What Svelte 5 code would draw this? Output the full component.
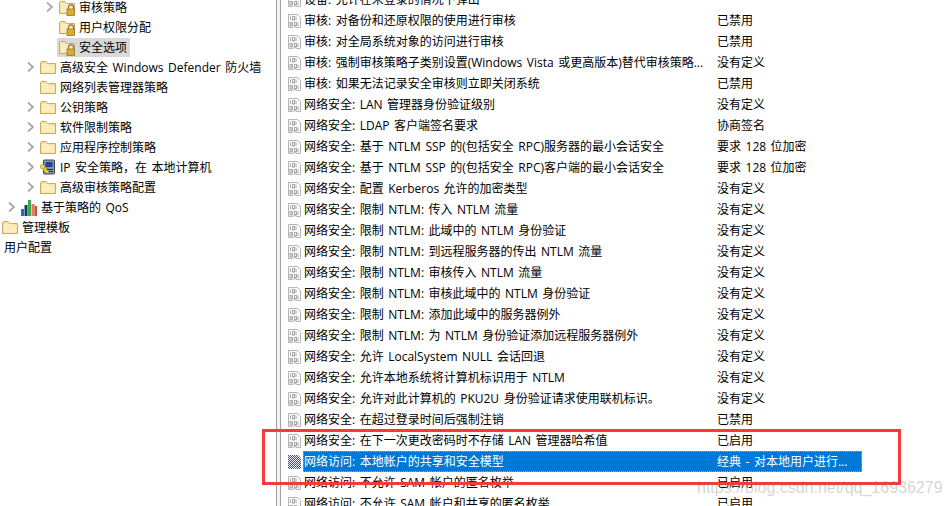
<script>
  const tree = [
    { label: '审核策略', level: 3, icon: 'lock', arrow: true },
    { label: '用户权限分配', level: 3, icon: 'lock' },
    { label: '安全选项', level: 3, icon: 'lock', active: true },
    { label: '高级安全 Windows Defender 防火墙', level: 2, icon: 'folder', arrow: true },
    { label: '网络列表管理器策略', level: 2, icon: 'folder' },
    { label: '公钥策略', level: 2, icon: 'folder', arrow: true },
    { label: '软件限制策略', level: 2, icon: 'folder', arrow: true },
    { label: '应用程序控制策略', level: 2, icon: 'folder', arrow: true },
    { label: 'IP 安全策略，在 本地计算机', level: 2, icon: 'ip', arrow: true },
    { label: '高级审核策略配置', level: 2, icon: 'folder', arrow: true },
    { label: '基于策略的 QoS', level: 1, icon: 'qos', arrow: true },
    { label: '管理模板', level: 0, icon: 'folder' },
    { label: '用户配置', level: -1 }
  ];

  const ntlm = '网络安全: 限制 NTLM: ';
  const undef = '没有定义';
  const rows = [
    ['设备: 允许在未登录的情况下弹出', ''],
    ['审核: 对备份和还原权限的使用进行审核', '已禁用'],
    ['审核: 对全局系统对象的访问进行审核', '已禁用'],
    ['审核: 强制审核策略子类别设置(Windows Vista 或更高版本)替代审核策略...', undef],
    ['审核: 如果无法记录安全审核则立即关闭系统', '已禁用'],
    ['网络安全: LAN 管理器身份验证级别', undef],
    ['网络安全: LDAP 客户端签名要求', '协商签名'],
    ['网络安全: 基于 NTLM SSP 的(包括安全 RPC)服务器的最小会话安全', '要求 128 位加密'],
    ['网络安全: 基于 NTLM SSP 的(包括安全 RPC)客户端的最小会话安全', '要求 128 位加密'],
    ['网络安全: 配置 Kerberos 允许的加密类型', undef],
    [ntlm + '传入 NTLM 流量', undef],
    [ntlm + '此域中的 NTLM 身份验证', undef],
    [ntlm + '到远程服务器的传出 NTLM 流量', undef],
    [ntlm + '审核传入 NTLM 流量', undef],
    [ntlm + '审核此域中的 NTLM 身份验证', undef],
    [ntlm + '添加此域中的服务器例外', undef],
    [ntlm + '为 NTLM 身份验证添加远程服务器例外', undef],
    ['网络安全: 允许 LocalSystem NULL 会话回退', undef],
    ['网络安全: 允许本地系统将计算机标识用于 NTLM', undef],
    ['网络安全: 允许对此计算机的 PKU2U 身份验证请求使用联机标识。', undef],
    ['网络安全: 在超过登录时间后强制注销', '已禁用'],
    ['网络安全: 在下一次更改密码时不存储 LAN 管理器哈希值', '已启用'],
    ['网络访问: 本地帐户的共享和安全模型', '经典 - 对本地用户进行...'],
    ['网络访问: 不允许 SAM 帐户的匿名枚举', '已启用'],
    ['网络访问: 不允许 SAM 帐户和共享的匿名枚举', '已启用']
  ];
  const selected = 22;
</script>

<svg class="defs" width="0" height="0" aria-hidden="true">
  <defs>
    <pattern id="dither" width="2" height="2" patternUnits="userSpaceOnUse">
      <rect width="2" height="2" fill="#e8edf2" />
      <rect width="1" height="1" fill="#44566e" />
      <rect x="1" y="1" width="1" height="1" fill="#44566e" />
    </pattern>
  </defs>
</svg>

{#snippet folder()}
  <path d="M0.5 3.5V14.5H15.5V4.5H7.5L6 2.5H1.5Z" fill="#f7e3a4" stroke="#c9a95f" />
  <path d="M2 6.5H14.5V13.5H2Z" fill="#fbeebc" />
  <path d="M1.5 5.5H8L9 4.5" fill="none" stroke="#fff6d8" />
{/snippet}

<main class="page">
  <nav class="tree">
    {#each tree as item}
      <div class="node lv{item.level + 1}">
        <span class="arrow">
          {#if item.arrow}
            <svg width="8" height="10" viewBox="0 0 8 10"><path d="M1 0.5L6 5L1 9.5" fill="none" stroke="#a6a6a6" stroke-width="1.7" /></svg>
          {/if}
        </span>
        <span class="label-wrap" class:active={item.active}>
          {#if item.icon === 'folder' || item.icon === 'lock'}
            <svg class="ico" width="16" height="17" viewBox="0 0 16 17">
              {@render folder()}
              {#if item.icon === 'lock'}
                <path d="M9.5 10V8.3A2.5 2.5 0 0 1 14.5 8.3V10" fill="none" stroke="#8c7433" stroke-width="1.2" />
                <rect x="8" y="10" width="7.5" height="6.5" fill="#d9ac32" stroke="#99782a" stroke-width=".8" />
              {/if}
            </svg>
          {:else if item.icon === 'ip'}
            <svg class="ico" width="16" height="17" viewBox="0 0 16 17">
              <rect x="3.5" y="1" width="11" height="14" rx="1" fill="#8b95a5" stroke="#3a4250" />
              <rect x="5.5" y="3" width="7" height="5" fill="#24409c" />
              <path d="M5 10.5H13M5 12.5H13" stroke="#2b2f38" />
              <path d="M1 7L8 13.5" stroke="#e8d820" stroke-width="2.4" />
              <circle cx="2.6" cy="7.6" r="2.2" fill="#f2e32c" stroke="#8a7f10" stroke-width=".6" />
            </svg>
          {:else if item.icon === 'qos'}
            <svg class="ico" width="16" height="17" viewBox="0 0 16 17">
              <rect x="0" y="10" width="3" height="7" fill="#1d6fc0" />
              <rect x="3.5" y="6" width="3" height="11" fill="#16365e" />
              <rect x="7" y="1" width="3" height="16" fill="#3ca64a" />
              <rect x="10.5" y="5" width="3" height="12" fill="#e8795a" />
              <rect x="13.5" y="7" width="2.5" height="10" fill="#c9553f" />
            </svg>
          {/if}
          <span class="label">{item.label}</span>
        </span>
      </div>
    {/each}
  </nav>

  <div class="divider"></div>

  <section class="list">
    {#each rows as [name, value], i}
      <div class="row">
        <svg class="doc" width="15" height="16" viewBox="0 0 15 16">
          {#if i === selected}
            <path d="M1 1H11L14 4V15H9L7.5 14L6 15H1Z" fill="url(#dither)" />
          {:else}
            <path d="M1.5 1.5H10.5L13.5 4.5V14.5H9.5L7.5 13.5L5.5 14.5H1.5Z" fill="#fbfbfb" stroke="#b4b4b4" />
            <path d="M3.5 3.5V7M9 3.5V7M5.5 9.5V13M11 9.5V13" stroke="#a8a8a8" />
            <rect x="5.5" y="3.5" width="2" height="3.5" fill="none" stroke="#a8a8a8" />
            <rect x="3" y="9.5" width="1.8" height="3.5" fill="none" stroke="#a8a8a8" />
            <rect x="7.5" y="9.5" width="2" height="3.5" fill="none" stroke="#a8a8a8" />
          {/if}
        </svg>
        <div class="cells" class:selected={i === selected}>
          <span class="name">{name}</span>
          <span class="value">{value}</span>
        </div>
      </div>
    {/each}
  </section>

  <div class="mark"></div>
  <div class="watermark">https://blog.csdn.net/qq_16936279</div>
</main>

<style>
  :global(body) {
    margin: 0;
    background: #fff;
  }

  .defs {
    position: absolute;
  }

  .page {
    position: relative;
    display: flex;
    width: 951px;
    height: 506px;
    overflow: hidden;
    background: #fff;
    color: #000;
    font-family: "Open Sans", "Noto Sans CJK SC", sans-serif;
    font-size: 12px;
    word-spacing: 1.4px;
  }

  /* left tree */
  .tree {
    width: 276px;
    flex: none;
    margin-top: -3px;
  }

  .node {
    display: flex;
    align-items: center;
    height: 20px;
    white-space: nowrap;
  }

  .lv0 { padding-left: 2px; }
  .lv1 { padding-left: 0; }
  .lv2 { padding-left: 4px; }
  .lv3 { padding-left: 23px; }
  .lv4 { padding-left: 42px; }

  .lv0 .arrow,
  .lv1 .arrow {
    width: 0;
  }

  .arrow {
    display: flex;
    align-items: center;
    justify-content: center;
    width: 15px;
    height: 20px;
    flex: none;
  }

  .label-wrap {
    display: flex;
    align-items: center;
    gap: 4px;
    height: 19px;
    padding: 0 3px 0 2px;
  }

  .label {
    margin-top: -1px;
  }

  .active {
    background: #d9d9d9;
  }

  .ico {
    flex: none;
  }

  /* divider between panes */
  .divider {
    width: 3px;
    flex: none;
    background: #f4f4f4;
    border-left: 1px solid #a0a0a0;
    border-right: 1px solid #a0a0a0;
  }

  /* right list */
  .list {
    flex: 1;
    margin-top: -11px;
    padding-left: 6px;
  }

  .row {
    display: flex;
    align-items: center;
    height: 21px;
  }

  .doc {
    flex: none;
    margin-right: 1px;
  }

  .cells {
    display: flex;
    align-items: center;
    width: 559px;
    height: 21px;
    box-sizing: border-box;
    padding: 0 0 1px 1px;
    white-space: nowrap;
  }

  .cells.selected {
    background: #0078d7;
    color: #fff;
    outline: 1px dotted #f0a040;
    outline-offset: -1px;
  }

  .name {
    width: 413px;
    flex: none;
    overflow: hidden;
  }

  /* annotation on top of the screenshot */
  .mark {
    position: absolute;
    left: 262px;
    top: 429px;
    width: 633px;
    height: 50px;
    border: 3px solid #f43a3a;
  }

  .watermark {
    position: absolute;
    left: 697px;
    top: 479px;
    color: rgba(120, 120, 120, 0.32);
    font-family: "Liberation Sans", sans-serif;
    font-size: 16px;
    word-spacing: 0;
    white-space: nowrap;
  }
</style>
